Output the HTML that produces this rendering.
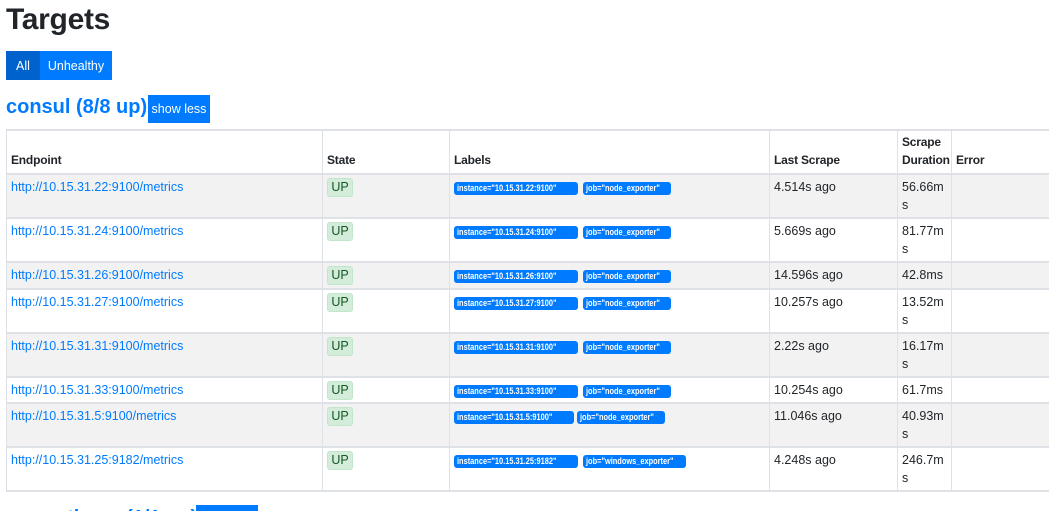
<!DOCTYPE html>
<html><head><meta charset="utf-8">
<style>
*{box-sizing:border-box;margin:0;padding:0}
html,body{width:1049px;height:511px;overflow:hidden}
body{background:#fff;font-family:"Liberation Sans",sans-serif;color:#212529;position:relative}
.abs{position:absolute}
h1{position:absolute;left:6px;top:3px;font-size:30px;font-weight:bold;color:#212529;letter-spacing:-0.3px}
.btn{position:absolute;background:#007bff;color:#fff;font-size:12.5px;display:flex;align-items:center;justify-content:center}
h2{position:absolute;font-size:20px;font-weight:bold;color:#007bff;white-space:nowrap}
.row{position:absolute;left:6px;width:1060px;border-bottom:2px solid #dee2e6;border-left:1px solid #dee2e6}
.row.g{background:#f2f2f2}
.vl{position:absolute;top:129px;height:363px;width:1px;background:#dee2e6}
.c{position:absolute;font-size:12.5px;line-height:18px}
a{color:#007bff;text-decoration:none}
.up{position:absolute;left:327px;width:26px;height:19px;background:#d4edda;border:1px solid #c3e6cb;border-radius:3px;color:#155724;font-size:12.5px;text-align:center;line-height:17px}
.b{position:absolute;height:13px;background:#007bff;color:#fff;border-radius:3px;line-height:13px;padding-left:3px;white-space:nowrap;overflow:hidden;display:flex;align-items:center}
.b span{display:block;font-size:9.5px;font-weight:bold;line-height:13px;transform:scaleX(0.78);transform-origin:left center}
.th{position:absolute;font-size:12px;font-weight:bold;line-height:18px;letter-spacing:-0.2px}
</style></head><body>
<h1>Targets</h1>
<div class="btn" style="left:6px;top:51px;width:34px;height:29px;background:#0062cc">All</div>
<div class="btn" style="left:40px;top:51px;width:72px;height:29px">Unhealthy</div>
<h2 style="left:6px;top:96px">consul (8/8 up)</h2>
<div class="btn" style="left:148px;top:95px;width:62px;height:28px">show less</div>

<div class="abs" style="left:6px;top:129px;width:1060px;height:2px;background:#dee2e6"></div>
<div class="row" style="top:131px;height:44px"></div>
<div class="th" style="left:11px;top:151px">Endpoint</div>
<div class="th" style="left:327px;top:151px">State</div>
<div class="th" style="left:454px;top:151px">Labels</div>
<div class="th" style="left:774px;top:151px">Last Scrape</div>
<div class="th" style="left:902px;top:133px">Scrape<br>Duration</div>
<div class="th" style="left:956px;top:151px">Error</div>

<div class="row g" style="top:175px;height:44px"></div>
<div class="row" style="top:219px;height:44px"></div>
<div class="row g" style="top:263px;height:27px"></div>
<div class="row" style="top:290px;height:44px"></div>
<div class="row g" style="top:334px;height:44px"></div>
<div class="row" style="top:378px;height:26px"></div>
<div class="row g" style="top:404px;height:44px"></div>
<div class="row" style="top:448px;height:44px"></div>

<div class="vl" style="left:322px"></div>
<div class="vl" style="left:449px"></div>
<div class="vl" style="left:769px"></div>
<div class="vl" style="left:897px"></div>
<div class="vl" style="left:951px"></div>

<div class="c" style="left:11px;top:178px"><a>http://10.15.31.22:9100/metrics</a></div>
<div class="up" style="top:178px">UP</div>
<div class="b" style="left:454px;top:182px;width:124px"><span>instance="10.15.31.22:9100"</span></div>
<div class="b" style="left:583px;top:182px;width:88px"><span>job="node_exporter"</span></div>
<div class="c" style="left:774px;top:178px">4.514s ago</div>
<div class="c" style="left:902px;top:178px">56.66m<br>s</div>

<div class="c" style="left:11px;top:222px"><a>http://10.15.31.24:9100/metrics</a></div>
<div class="up" style="top:222px">UP</div>
<div class="b" style="left:454px;top:226px;width:124px"><span>instance="10.15.31.24:9100"</span></div>
<div class="b" style="left:583px;top:226px;width:88px"><span>job="node_exporter"</span></div>
<div class="c" style="left:774px;top:222px">5.669s ago</div>
<div class="c" style="left:902px;top:222px">81.77m<br>s</div>

<div class="c" style="left:11px;top:266px"><a>http://10.15.31.26:9100/metrics</a></div>
<div class="up" style="top:266px">UP</div>
<div class="b" style="left:454px;top:270px;width:124px"><span>instance="10.15.31.26:9100"</span></div>
<div class="b" style="left:583px;top:270px;width:88px"><span>job="node_exporter"</span></div>
<div class="c" style="left:774px;top:266px">14.596s ago</div>
<div class="c" style="left:902px;top:266px">42.8ms</div>

<div class="c" style="left:11px;top:293px"><a>http://10.15.31.27:9100/metrics</a></div>
<div class="up" style="top:293px">UP</div>
<div class="b" style="left:454px;top:297px;width:124px"><span>instance="10.15.31.27:9100"</span></div>
<div class="b" style="left:583px;top:297px;width:88px"><span>job="node_exporter"</span></div>
<div class="c" style="left:774px;top:293px">10.257s ago</div>
<div class="c" style="left:902px;top:293px">13.52m<br>s</div>

<div class="c" style="left:11px;top:337px"><a>http://10.15.31.31:9100/metrics</a></div>
<div class="up" style="top:337px">UP</div>
<div class="b" style="left:454px;top:341px;width:124px"><span>instance="10.15.31.31:9100"</span></div>
<div class="b" style="left:583px;top:341px;width:88px"><span>job="node_exporter"</span></div>
<div class="c" style="left:774px;top:337px">2.22s ago</div>
<div class="c" style="left:902px;top:337px">16.17m<br>s</div>

<div class="c" style="left:11px;top:381px"><a>http://10.15.31.33:9100/metrics</a></div>
<div class="up" style="top:381px">UP</div>
<div class="b" style="left:454px;top:385px;width:124px"><span>instance="10.15.31.33:9100"</span></div>
<div class="b" style="left:583px;top:385px;width:88px"><span>job="node_exporter"</span></div>
<div class="c" style="left:774px;top:381px">10.254s ago</div>
<div class="c" style="left:902px;top:381px">61.7ms</div>

<div class="c" style="left:11px;top:407px"><a>http://10.15.31.5:9100/metrics</a></div>
<div class="up" style="top:407px">UP</div>
<div class="b" style="left:454px;top:411px;width:120px"><span>instance="10.15.31.5:9100"</span></div>
<div class="b" style="left:577px;top:411px;width:88px"><span>job="node_exporter"</span></div>
<div class="c" style="left:774px;top:407px">11.046s ago</div>
<div class="c" style="left:902px;top:407px">40.93m<br>s</div>

<div class="c" style="left:11px;top:451px"><a>http://10.15.31.25:9182/metrics</a></div>
<div class="up" style="top:451px">UP</div>
<div class="b" style="left:454px;top:455px;width:124px"><span>instance="10.15.31.25:9182"</span></div>
<div class="b" style="left:583px;top:455px;width:103px"><span>job="windows_exporter"</span></div>
<div class="c" style="left:774px;top:451px">4.248s ago</div>
<div class="c" style="left:902px;top:451px">246.7m<br>s</div>

<h2 style="left:6px;top:507px">prometheus (1/1 up)</h2>
<div class="btn" style="left:196px;top:505px;width:62px;height:28px">show less</div>
</body></html>
